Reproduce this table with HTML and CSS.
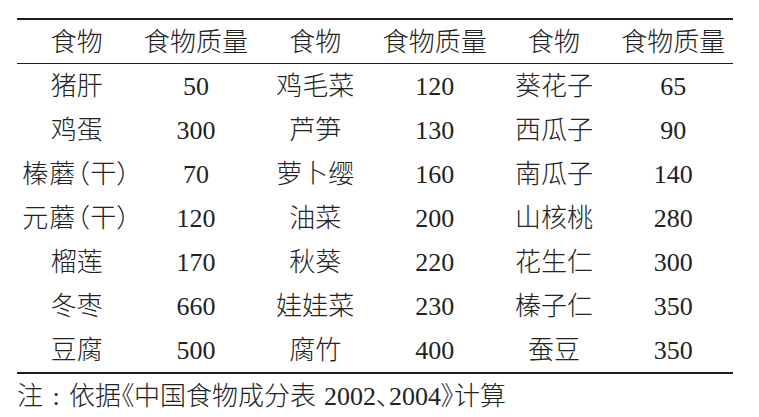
FILE: index.html
```html
<!DOCTYPE html>
<html lang="zh-CN">
<head>
<meta charset="utf-8">
<title>食物质量</title>
<link rel="stylesheet" href="styles.css">
</head>
<body>
<div class="page">
  <table class="food-table">
    <thead>
      <tr><th>食物</th><th>食物质量</th><th>食物</th><th>食物质量</th><th>食物</th><th>食物质量</th></tr>
    </thead>
    <tbody>
      <tr><td>猪肝</td><td class="num">50</td><td>鸡毛菜</td><td class="num">120</td><td>葵花子</td><td class="num">65</td></tr>
      <tr><td>鸡蛋</td><td class="num">300</td><td>芦笋</td><td class="num">130</td><td>西瓜子</td><td class="num">90</td></tr>
      <tr><td><span class="paren">榛蘑（干）</span></td><td class="num">70</td><td>萝卜缨</td><td class="num">160</td><td>南瓜子</td><td class="num">140</td></tr>
      <tr><td><span class="paren">元蘑（干）</span></td><td class="num">120</td><td>油菜</td><td class="num">200</td><td>山核桃</td><td class="num">280</td></tr>
      <tr><td>榴莲</td><td class="num">170</td><td>秋葵</td><td class="num">220</td><td>花生仁</td><td class="num">300</td></tr>
      <tr><td>冬枣</td><td class="num">660</td><td>娃娃菜</td><td class="num">230</td><td>榛子仁</td><td class="num">350</td></tr>
      <tr><td>豆腐</td><td class="num">500</td><td>腐竹</td><td class="num">400</td><td>蚕豆</td><td class="num">350</td></tr>
    </tbody>
  </table>
  <p class="note">注<span class="colon">:</span>依据<span class="pp">《</span>中国食物成分表<span class="num gap">2002</span><span class="pp">、</span><span class="num">2004</span><span class="pp">》</span>计算</p>
</div>
</body>
</html>
```

FILE: styles.css
```css
html, body {
  margin: 0;
  padding: 0;
  background: #ffffff;
}

body {
  font-family: "Liberation Serif", "Noto Sans CJK SC", serif;
  font-size: 26px;
  font-weight: 300;
  color: #222222;
}

.page {
  padding: 18px 0 0 17px;
}

.food-table {
  width: 716px;
  border-collapse: collapse;
  table-layout: fixed;
  border-top: 2px solid #1c1c1c;
  border-bottom: 2px solid #1c1c1c;
  font-family: inherit;
  font-size: inherit;
}

.food-table th,
.food-table td {
  padding: 2px 0 0 0;
  text-align: center;
  vertical-align: middle;
  font-family: inherit;
  font-weight: 300;
  line-height: 1;
  white-space: nowrap;
}

.food-table thead th {
  height: 41px;
  border-bottom: 1px solid #1c1c1c;
}

.food-table tbody td {
  height: 42px;
}

.num {
  font-family: "Liberation Serif", "Times New Roman", serif;
  font-weight: 400;
}

.food-table td.num {
  font-weight: 400;
}

.pp {
  font-feature-settings: "palt" 1;
}

.paren {
  font-feature-settings: "palt" 1;
  letter-spacing: 1px;
}

.colon {
  display: inline-block;
  width: 26px;
  text-align: center;
  font-family: "Liberation Serif", serif;
  font-weight: 400;
}

.note {
  margin: 10px 0 0 0;
  line-height: 26px;
  white-space: nowrap;
}

.gap {
  margin-left: 8px;
}
```
